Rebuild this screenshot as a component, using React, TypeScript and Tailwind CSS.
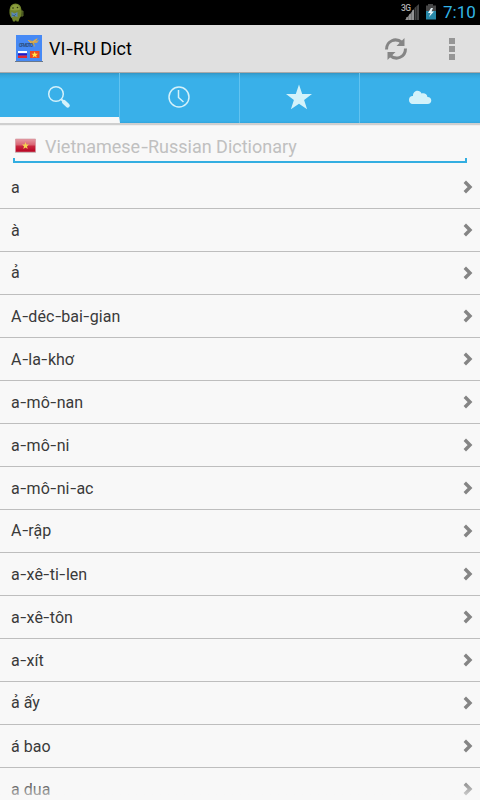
import { Fragment } from 'react';

const entries = [
  'a', 'à', 'ả', 'A-déc-bai-gian', 'A-la-khơ', 'a-mô-nan', 'a-mô-ni', 'a-mô-ni-ac',
  'A-rập', 'a-xê-ti-len', 'a-xê-tôn', 'a-xít', 'ả ấy', 'á bao', 'a dua',
];

// Words from the font with a slightly wider hyphen.
function Wide({ text }: { text: string }) {
  return (
    <>
      {text.split('-').map((part, i) => (
        <Fragment key={i}>
          {i > 0 && <span className="inline-block w-[0.43em] text-center"><span className="inline-block scale-x-[1.35]">-</span></span>}
          {part}
        </Fragment>
      ))}
    </>
  );
}

function StatusBar() {
  return (
    <div className="flex h-[25px] shrink-0 items-start bg-black">
      <svg className="ml-2 mt-[2px]" width="17" height="21" viewBox="0 0 17 21">
        <path d="M12 9h3v5h-3z" fill="#3c4a16" stroke="#59692a" />
        <path d="M1.500 8Q2 1.500 7.500 1.500T13.500 8q.5 6-2 8.500l-1 3H8.500l-.5-1.500-1 1.500H5l-1-3Q1 14 1.500 8z" fill="#71842c" />
        <path d="M2.500 8Q3 2.500 7.500 2.500q4 0 4.500 5-4 1.500-9.500.5z" fill="#8c9e3e" />
        <circle cx="5" cy="6" r=".8" fill="#2a3310" />
        <circle cx="9.500" cy="5.500" r=".8" fill="#2a3310" />
        <path d="M3.500 10l3 1.500 3-1.500v5l-3-1-3 1.500z" fill="#5b88b4" />
        <path d="M4 13l3 1M8 12l-2 2" stroke="#345a80" strokeWidth=".8" />
      </svg>
      <div className="flex-1" />
      <svg width="18" height="18" viewBox="0 0 18 18" className="mt-[3px]">
        <path d="M4 17L13 6v11z" fill="#777" />
        <path d="M6 17v-3M9 17v-6M12 17V7" stroke="#b0b0b0" />
        <path d="M13.500 5L18 1v16h-4.500z" fill="#444" />
        <path d="M15.500 3v14" stroke="#222" strokeWidth=".7" />
        <text x="0" y="7.500" fontFamily="Roboto, sans-serif" fontSize="8.500" fontWeight="500" textLength="10" fill="#b0b0b0">3G</text>
      </svg>
      <svg width="12" height="17" viewBox="0 0 12 17" className="ml-[6px] mt-1">
        <path d="M3 0h5v1.500h3V8H1V1.500h2z" fill="#474747" />
        <path d="M1 7h10v8.500H1z" fill="#2788a8" />
        <path d="M6 4L3 9h2.500L4 13l5-5.500H6.500L8 4z" fill="#e8f4f8" />
      </svg>
      <span className="ml-[6px] mr-[6px] w-[31px] whitespace-nowrap text-[17px] leading-[25px] text-[#33b5e5]">7:10</span>
    </div>
  );
}

function AppIcon() {
  return (
    <svg width="28" height="28" viewBox="0 0 28 28" className="ml-[15px]">
      <path d="M1 0h26v26H1z" fill="#4689f5" />
      <path d="M0 26.500h28" stroke="#68788c" />
      <path d="M13 5l5 1 1-1 4-2-2 3 3-1-2 3h-3l1 4-3-3z" fill="#cda456" />
      <path d="M13 5l3 3M18 7l4-3" stroke="#e3b34f" />
      <text x="4" y="11.500" fontFamily="Roboto, sans-serif" fontSize="4.500" fontWeight="700" textLength="14" fill="#2d4f80">CFMOTO</text>
      <path d="M3 16h9v2.300H3z" fill="#fff" />
      <path d="M3 18.300h9v2.300H3z" fill="#2118c8" />
      <path d="M3 20.600h9V23H3z" fill="#e12734" />
      <path d="M15 16h9.500v7H15z" fill="#ed4a20" />
      <path d="M19.700 16.500l.9 2.200h2.400l-1.900 1.500.7 2.400-2.100-1.400-2.100 1.400.7-2.400-1.900-1.500h2.400z" fill="#ffe64d" />
    </svg>
  );
}

function ActionBar() {
  return (
    <div className="flex h-12 shrink-0 items-center border-b border-[#aaa] bg-[#e0e0e0]">
      <AppIcon />
      <h1 className="ml-[6px] flex-1 text-[18px] font-normal leading-6 text-black"><Wide text="VI-RU Dict" /></h1>
      <svg width="24" height="24" viewBox="0 0 24 24" className="mr-[41px]" fill="none" stroke="#858585" strokeWidth="3">
        <path d="M2.500 12.500C2.500 4 11.500 0 18 5.500M21.500 11.500C21.500 20 12.500 24 6 18.500" />
        <path d="M20.500 1v8h-8zM3.500 23v-8h8z" fill="#858585" stroke="none" />
      </svg>
      <div className="mr-[25px] flex flex-col gap-[2px]">
        {[0, 1, 2].map(i => <i key={i} className="size-[6px] bg-[#969696]" />)}
      </div>
    </div>
  );
}

function Tabs() {
  const tab = 'flex w-[120px] justify-center border-r border-[#62c3f0]';
  return (
    <nav className="flex h-[50px] shrink-0 bg-[linear-gradient(#3295c3_0px,#35a5da_2px,#39b0e9_6px,#39b0e9_48px,#32a5dc_50px)]">
      <div className={tab + ' border-b-[6px] border-b-[#f8f8f8]'}>
        <svg width="24" height="24" viewBox="0 0 24 24" className="mt-3 -ml-px" fill="none" stroke="#d4f1fa">
          <circle cx="9" cy="9" r="7.300" strokeWidth="1.500" />
          <path d="M14 14l3 3" strokeWidth="2" />
          <path d="M17 17l3.700 3.500" strokeWidth="4.200" strokeLinecap="round" />
        </svg>
      </div>
      <div className={tab}>
        <svg width="24" height="24" viewBox="0 0 24 24" className="mt-3 -ml-px" fill="none" stroke="#d4f1fa" strokeWidth="1.500">
          <circle cx="12" cy="12" r="10" /><path d="M11.500 5v7.500l5 4.500" />
        </svg>
      </div>
      <div className={tab}>
        <svg width="28" height="28" viewBox="0 0 28 28" className="mt-[10px] -ml-px" fill="#d3f2fa">
          <path d="M14 1.500l3.200 9.500H27l-7.900 6 3 9.200L14 20.700l-8.100 5.500 3-9.200L1 11h9.800z" />
        </svg>
      </div>
      <div className="flex w-[120px] justify-center">
        <svg width="24" height="15" viewBox="0 0 24 15" className="mt-[17px]" fill="#d3f2fa">
          <path d="M4.500 14A4.100 4.100 0 0 1 4 6h1C4.700 0 12 -1 13.500 3.500 16.500 2.500 19.500 4.500 19.400 7c5.200-.1 5.200 7 0 7z" />
        </svg>
      </div>
    </nav>
  );
}

function Search() {
  return (
    <div className="h-[43px] shrink-0 border-t-2 border-[#cfcfcf] shadow-[inset_0_1px_0_#efefef]">
      <div className="mx-[13px] flex h-[38px] items-start">
        <svg width="22" height="16" viewBox="0 0 22 16" className="ml-[2px] mt-[13px]">
          <defs><linearGradient id="flag" x2="0" y2="1"><stop stopColor="#e79aa4" /><stop offset=".48" stopColor="#d9606f" /><stop offset=".52" stopColor="#ca2b43" /><stop offset="1" stopColor="#b80020" /></linearGradient></defs>
          <path d="M0 14.500h21" stroke="#ccc" />
          <path d="M.5 1h20v13H.5z" fill="url(#flag)" stroke="#cf9299" strokeWidth=".6" />
          <path d="M10.500 4l.9 2.600H14l-2 1.700.7 2.700-2.200-1.500L8.300 11 9 8.300 7 6.600h2.600z" fill="#f4d350" />
        </svg>
        <span className="ml-2 mt-[9px] whitespace-nowrap text-[18px] leading-[26px] text-[#c0c0c0]"><Wide text="Vietnamese-Russian Dictionary" /></span>
      </div>
      <div className="relative mx-[13px] -mt-[5px] h-[5px] border-x-2 border-b-2 border-[#33aee1]" />
    </div>
  );
}

export default function App() {
  return (
    <div className="flex h-[800px] w-[480px] flex-col overflow-hidden bg-[#f8f8f8] font-[Roboto,'Noto_Sans',sans-serif]">
      <StatusBar />
      <ActionBar />
      <Tabs />
      <Search />
      <div className="relative min-h-0 flex-1 overflow-hidden">
        <ul>
          {entries.map(word => (
            <li key={word} className="flex h-[43px] items-center border-b border-[#bebebe] text-[16px] leading-5 tracking-[0.03px] text-[#3a3a3a]">
              <span className={/[ảậ]/.test(word) ? 'ml-[11px] flex-1' : 'ml-[11px] flex-1 pt-px'}><Wide text={word} /></span>
              <svg width="10" height="14" viewBox="0 0 10 14" className="mb-px mr-[7px]" fill="none" stroke="#858585" strokeWidth="3.400">
                <path d="M1.800 1.800L7 7l-5.200 5.200" />
              </svg>
            </li>
          ))}
        </ul>
        <div className="absolute inset-x-0 bottom-0 h-5 bg-linear-to-b from-[#f8f8f8]/0 to-[#f8f8f8]/80" />
      </div>
    </div>
  );
}
